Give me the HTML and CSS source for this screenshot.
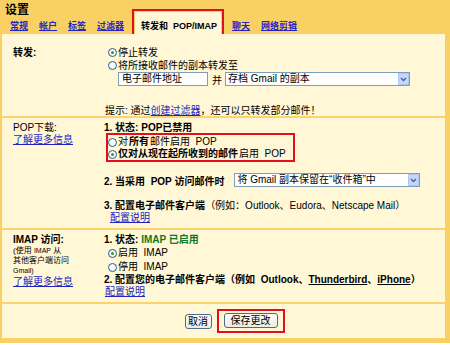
FILE: index.html
```html
<!DOCTYPE html>
<html lang="zh-CN">
<head>
    <meta charset="UTF-8">
    <title>设置 - 转发和 POP/IMAP</title>
    <link rel="stylesheet" href="styles.css">
</head>
<body>
    <div class="frame">
        <h1 class="title">设置</h1>
        <div class="tabs">
            <a class="tab" href="#">常规</a>
            <a class="tab" href="#">帐户</a>
            <a class="tab" href="#">标签</a>
            <a class="tab" href="#">过滤器</a>
            <span class="tab tab-on">转发和&nbsp; POP/IMAP</span>
            <a class="tab" href="#">聊天</a>
            <a class="tab" href="#">网络剪辑</a>
        </div>

        <div class="panel">
            <!-- forwarding -->
            <div class="section sec-fwd">
                <div class="label"><b>转发:</b></div>
                <div class="body">
                    <div class="opt"><span class="radio on"></span>停止转发</div>
                    <div class="opt"><span class="radio"></span>将所接收邮件的副本转发至</div>
                    <div class="fwd-row">
                        <span class="textbox">电子邮件地址</span>
                        <span class="and">并</span>
                        <span class="select sel-archive">存档 Gmail 的副本<span class="arrow"><svg width="7" height="5" viewBox="0 0 7 5"><path d="M1 1 L3.5 3.5 L6 1" fill="none" stroke="#4a5f8c" stroke-width="1.3"/></svg></span></span>
                    </div>
                    <p class="hint">提示: 通过<a href="#">创建过滤器</a>，还可以只转发部分邮件！</p>
                </div>
            </div>

            <!-- pop -->
            <div class="section sec-pop">
                <div class="label">
                    <div class="label-title">POP下载:</div>
                    <a class="more" href="#">了解更多信息</a>
                </div>
                <div class="body">
                    <div class="item"><b>1. 状态: POP已禁用</b></div>
                    <div class="mark">
                        <div class="opt opt-pop"><span class="radio"></span>对<b>所有</b>邮件启用&nbsp; POP</div>
                        <div class="opt opt-pop"><span class="radio on"></span><b>仅对从现在起所收到的邮件</b>启用&nbsp; POP</div>
                    </div>
                    <div class="sel-row">
                        <b>2. 当采用&nbsp; POP 访问邮件时</b>
                        <span class="select sel-keep">将 Gmail 副本保留在“收件箱”中<span class="arrow"><svg width="7" height="5" viewBox="0 0 7 5"><path d="M1 1 L3.5 3.5 L6 1" fill="none" stroke="#4a5f8c" stroke-width="1.3"/></svg></span></span>
                    </div>
                    <div class="item item-3"><b>3. 配置电子邮件客户端</b>（例如：Outlook、Eudora、Netscape Mail）</div>
                    <a class="howto howto-pop" href="#">配置说明</a>
                </div>
            </div>

            <!-- imap -->
            <div class="section sec-imap">
                <div class="label">
                    <div class="label-title"><b>IMAP 访问:</b></div>
                    <div class="small">(使用 <span class="tiny">IMAP</span> 从</div>
                    <div class="small">其他客户端访问</div>
                    <div class="small"><span class="tiny">Gmail)</span></div>
                    <a class="more" href="#">了解更多信息</a>
                </div>
                <div class="body">
                    <div class="item"><b>1. 状态: <span class="ok">IMAP 已启用</span></b></div>
                    <div class="opt opt-imap"><span class="radio on"></span>启用&nbsp; IMAP</div>
                    <div class="opt opt-imap"><span class="radio"></span>停用&nbsp; IMAP</div>
                    <div class="item item-imap"><b>2. 配置您的电子邮件客户端（例如&nbsp; Outlook、<u>Thunderbird</u>、<u>iPhone</u>）</b></div>
                    <a class="howto" href="#">配置说明</a>
                </div>
            </div>

            <div class="actions">
                <button class="btn" type="button">取消</button>
                <span class="mark mark-btn"><button class="btn btn-save" type="button">保存更改</button></span>
            </div>
        </div>
    </div>
</body>
</html>
```

FILE: styles.css
```css
* {
    margin: 0;
    padding: 0;
    box-sizing: border-box;
}

body {
    font-family: "Liberation Sans", "Noto Sans CJK SC", sans-serif;
    font-size: 10px;
    color: #000;
    background: #fff;
}

a {
    color: #2424c4;
    text-decoration: underline;
}

b {
    font-weight: bold;
}

.frame {
    width: 450px;
    height: 343px;
    display: flex;
    flex-direction: column;
    background: #f9d064;
    padding: 0 5px 5px 2px;
}

.title {
    font-size: 12px;
    font-weight: bold;
    line-height: 12px;
    padding: 4px 0 0 3px;
}

.tabs {
    display: flex;
    align-items: flex-end;
    gap: 11px;
    height: 22px;
    margin-top: -4px;
    padding-left: 8px;
}

.tab {
    font-size: 9px;
    font-weight: bold;
    line-height: 12px;
    padding-bottom: 2px;
}

.tab-on {
    height: 22px;
    padding: 8px 4px 2px 6px;
    background: #fff7d6;
    outline: 2px solid #e3101c;
    outline-offset: 1px;
}

.panel {
    flex: 1;
    background: #fff7d6;
    padding-top: 8px;
}

.section {
    display: grid;
    grid-template-columns: 91px 1fr;
    padding-left: 11px;
    border-bottom: 2px solid #fbd46e;
}

.sec-fwd {
    padding-top: 4px;
}

.sec-pop {
    padding: 3px 0 4px 11px;
}

.sec-imap {
    padding: 4px 0 5px 11px;
}

.label {
    line-height: 13px;
}

.sec-pop .more {
    display: block;
    line-height: 11px;
}

.sec-imap .label-title {
    line-height: 12px;
}

.small {
    font-size: 8px;
    line-height: 10px;
}

.tiny {
    font-size: 7px;
}

.sec-imap .more {
    display: block;
    line-height: 11px;
}

.opt {
    display: flex;
    align-items: center;
    gap: 1px;
    padding-left: 4px;
    line-height: 13px;
}

.radio {
    width: 9px;
    height: 9px;
    border: 1px solid #2b5c8c;
    border-radius: 50%;
    background: radial-gradient(circle at 40% 40%, #fff 0%, #e8eef4 100%);
    display: flex;
    align-items: center;
    justify-content: center;
    flex-shrink: 0;
}

.radio.on::after {
    content: "";
    width: 3px;
    height: 3px;
    border-radius: 50%;
    background: #2aa22a;
}

.fwd-row {
    display: flex;
    align-items: center;
    height: 14px;
    margin-left: 14px;
}

.textbox {
    width: 90px;
    height: 14px;
    line-height: 12px;
    border: 1px solid #7f9db9;
    background: #fff;
    padding-left: 3px;
}

.and {
    margin: 0 3px 0 4px;
}

.select {
    display: inline-flex;
    align-items: center;
    justify-content: space-between;
    height: 14px;
    line-height: 12px;
    border: 1px solid #7f9db9;
    background: #fff;
    padding-left: 2px;
}

.sel-archive {
    width: 185px;
}

.sel-keep {
    width: 186px;
    margin-left: 10px;
}

.arrow {
    width: 11px;
    height: 12px;
    background: #c6d6fa;
    border: 1px solid #b1c5f2;
    display: flex;
    align-items: center;
    justify-content: center;
}

.hint {
    margin-top: 20px;
    line-height: 10px;
    padding-left: 1px;
}

.item {
    line-height: 13px;
}

.mark {
    display: inline-block;
    border: 2px solid #e3101c;
    margin: -1px 0 0 2px;
    padding: 1px 7px 0 0;
}

.opt-pop {
    padding-left: 0;
    line-height: 12px;
}

.sel-row {
    display: flex;
    align-items: center;
    height: 14px;
    margin-top: 11px;
}

.item-3 {
    margin-top: 12px;
}

.howto {
    display: block;
    line-height: 12px;
    padding-left: 1px;
}

.howto-pop {
    padding-left: 6px;
}

.sec-imap .item {
    line-height: 12px;
}

.ok {
    color: #0d7a23;
}

.opt-imap {
    line-height: 14px;
}

.sec-imap .howto {
    line-height: 11px;
}

.actions {
    display: flex;
    justify-content: center;
    align-items: center;
    gap: 5px;
    padding: 5px 0 5px 22px;
}

.btn {
    font-family: "Liberation Sans", "Noto Sans CJK SC", sans-serif;
    font-size: 10px;
    line-height: 13px;
    height: 15px;
    width: 27px;
    border: 1px solid #4e6a8a;
    border-radius: 3px;
    background: linear-gradient(#fdfdfb, #ecebe3);
    color: #000;
}

.btn-save {
    width: 54px;
    display: block;
}

.mark-btn {
    margin: 0;
    padding: 2px 5px 3px 5px;
}
```
